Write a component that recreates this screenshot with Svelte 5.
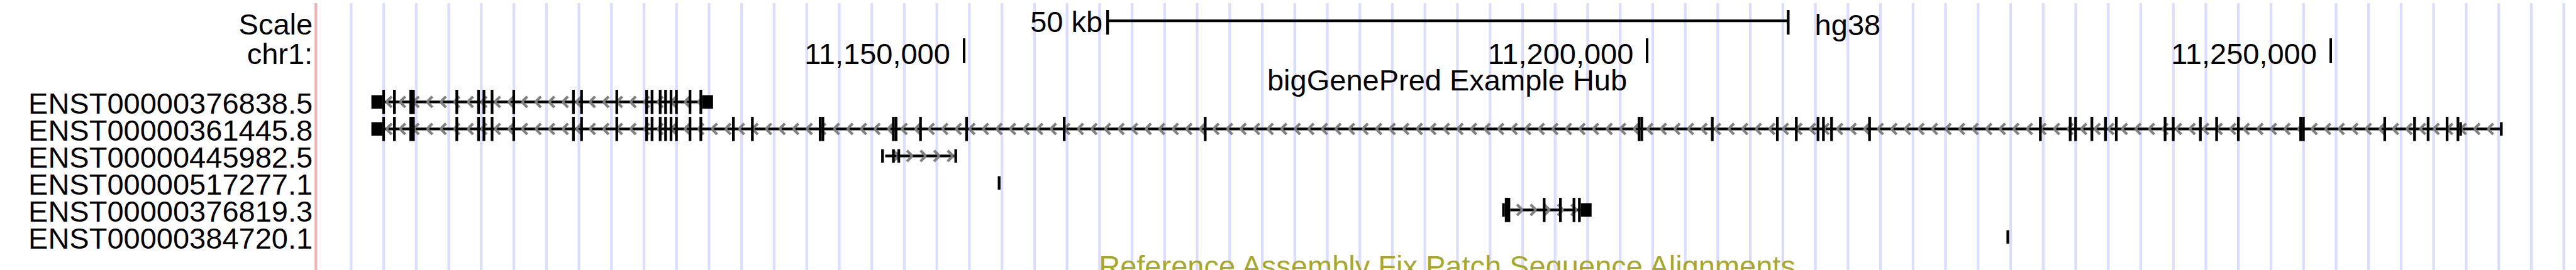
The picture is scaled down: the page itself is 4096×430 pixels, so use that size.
<script>
  // All x positions are in browser units: the whole image is 950 units wide.
  const WIDTH = 950;
  const TRACK_START = 116;
  const TRACK_WIDTH = WIDTH - TRACK_START;

  const gridLines = Array.from({ length: 69 }, (_, i) => 129 + i * 12);

  const ruler = [
    { label: '11,150,000', units: 356 - TRACK_START },
    { label: '11,200,000', units: 252 },
    { label: '11,250,000', units: 252 }
  ];

  const shared = [
    [141, 1], [145, 1], [151, 2], [168, 1], [176, 1], [178, 1], [181, 1], [189, 1],
    [211, 1], [214, 1], [227, 1], [238, 1], [240, 1], [243, 1], [245, 1], [247, 1],
    [249, 1], [254, 1], [258, 1]
  ];

  const single = (list) => list.map((x) => [x, 1]);

  // coding: tall exons, utr: short exons, both as [start, width]
  const genes = [
    {
      name: 'ENST00000376838.5',
      strand: '-',
      intron: [141, 259],
      barbs: [142, 257],
      coding: shared,
      utr: [[137, 4], [259, 4]]
    },
    {
      name: 'ENST00000361445.8',
      strand: '-',
      intron: [141, 922],
      barbs: [142, 917],
      coding: [
        ...shared,
        ...single([
          270, 277, 302, 303, 329, 330, 339, 356, 392, 444, 604, 605, 631, 655, 662,
          670, 672, 675, 689, 752, 763, 765, 771, 776, 780, 798, 801, 811, 817, 825,
          848, 849, 879, 890, 895, 902, 906
        ])
      ],
      utr: [[137, 4], [907, 1], [922, 1]]
    },
    {
      name: 'ENST00000445982.5',
      strand: '+',
      intron: [326.5, 352],
      barbs: [331, 351],
      coding: [],
      utr: single([325, 329, 331, 352])
    },
    { name: 'ENST00000517277.1', coding: [], utr: [[368, 1]] },
    {
      name: 'ENST00000376819.3',
      strand: '+',
      intron: [557, 583],
      barbs: [561, 581],
      coding: [[555, 2], [569, 1], [575, 1], [580, 1], [582, 1]],
      utr: [[554, 1], [583, 4]]
    },
    { name: 'ENST00000384720.1', coding: [], utr: [[740, 1]] }
  ];

  function barbPath(gene) {
    const back = gene.strand === '-' ? 2 : -2;
    let d = '';
    for (let x = gene.barbs[0]; x <= gene.barbs[1]; x += 5) {
      const tip = x + 0.5;
      d += `M${tip} 4.5L${tip + back} 2.5M${tip} 4.5L${tip + back} 6.5`;
    }
    return d;
  }

  const share = (units) => `${(units / TRACK_WIDTH) * 100}%`;
</script>

<main class="browser">
  <svg class="guides" viewBox="0 0 {WIDTH} 10" preserveAspectRatio="none" aria-hidden="true">
    <rect class="edge" x={TRACK_START} y="0" width="1" height="10" />
    {#each gridLines as x}
      <rect class="guide" {x} y="0" width="1" height="10" />
    {/each}
  </svg>

  <div class="row scale-row">
    <span class="label">Scale</span>
    <div class="track scale">
      <span class="scale-size" style:width={share(408 - TRACK_START)}>50 kb</span>
      <svg
        class="scale-bar"
        style:width={share(252)}
        viewBox="0 0 252 9"
        preserveAspectRatio="none"
        aria-hidden="true"
      >
        <path d="M0 0H1V3.45H251V0H252V9H251V4.45H1V9H0Z" />
      </svg>
      <span class="assembly">hg38</span>
    </div>
  </div>

  <div class="row ruler-row">
    <span class="label">chr1:</span>
    <div class="track ruler">
      {#each ruler as mark}
        <span class="mark" style:width={share(mark.units)}>{mark.label}<i class="tick"></i></span>
      {/each}
    </div>
  </div>

  <div class="row title-row">
    <h2 class="title">bigGenePred Example Hub</h2>
  </div>

  {#each genes as gene}
    <div class="row gene-row">
      <span class="label">{gene.name}</span>
      <svg
        class="track gene"
        viewBox="{TRACK_START} 0 {TRACK_WIDTH} 10"
        preserveAspectRatio="none"
        aria-hidden="true"
      >
        {#if gene.intron}
          <rect x={gene.intron[0]} y="4" width={gene.intron[1] - gene.intron[0]} height="1" />
          <path class="barbs" d={barbPath(gene)} />
        {/if}
        {#each gene.coding as [x, width]}
          <rect {x} y="0" {width} height="9" />
        {/each}
        {#each gene.utr as [x, width]}
          <rect {x} y="2" {width} height="5" />
        {/each}
      </svg>
    </div>
  {/each}

  <div class="row patch-row">
    <h2 class="title patches">Reference Assembly Fix Patch Sequence Alignments</h2>
  </div>
</main>

<style>
  :global(body) {
    margin: 0;
    background: #fff;
    overflow: hidden;
  }

  .browser {
    position: relative;
    box-sizing: border-box;
    height: 100vh;
    padding-top: 17px;
    overflow: hidden;
    color: #000;
    font-family: 'Liberation Sans', Arial, Helvetica, sans-serif;
    font-size: 47px;
    line-height: 43px;
    white-space: nowrap;
  }

  .guides {
    position: absolute;
    z-index: -1;
    top: 5px;
    left: 0;
    width: 100%;
    height: 100%;
  }

  .guide {
    fill: #dcdcff;
  }

  .edge {
    fill: #eeb2b2;
  }

  .row {
    display: grid;
    grid-template-columns: minmax(0, 116fr) minmax(0, 834fr);
    height: 43px;
  }

  .label {
    padding-right: 3px;
    text-align: right;
  }

  .track {
    display: flex;
    width: 100%;
    min-width: 0;
  }

  .scale-size {
    box-sizing: border-box;
    padding-right: 6px;
    line-height: 36px;
    text-align: right;
  }

  .scale-bar {
    height: 39px;
    margin-top: -1px;
  }

  .assembly {
    padding-left: 40px;
    line-height: 46px;
  }

  .ruler-row {
    height: 46px;
    line-height: 52px;
  }

  .mark {
    display: flex;
    justify-content: flex-end;
    gap: 20px;
  }

  .tick {
    width: 4px;
    height: 39px;
    margin-top: 1px;
    background: #000;
  }

  .title-row {
    height: 37px;
  }

  .title {
    grid-column: 2;
    margin: 0;
    padding-left: 6px;
    font-size: 47px;
    font-weight: 400;
    text-align: center;
  }

  .gene {
    display: block;
    height: 43px;
  }

  .barbs {
    fill: none;
    stroke: #808080;
    stroke-width: 1;
  }

  .patch-row {
    line-height: 46px;
  }

  .patches {
    color: #a8a828;
  }
</style>
